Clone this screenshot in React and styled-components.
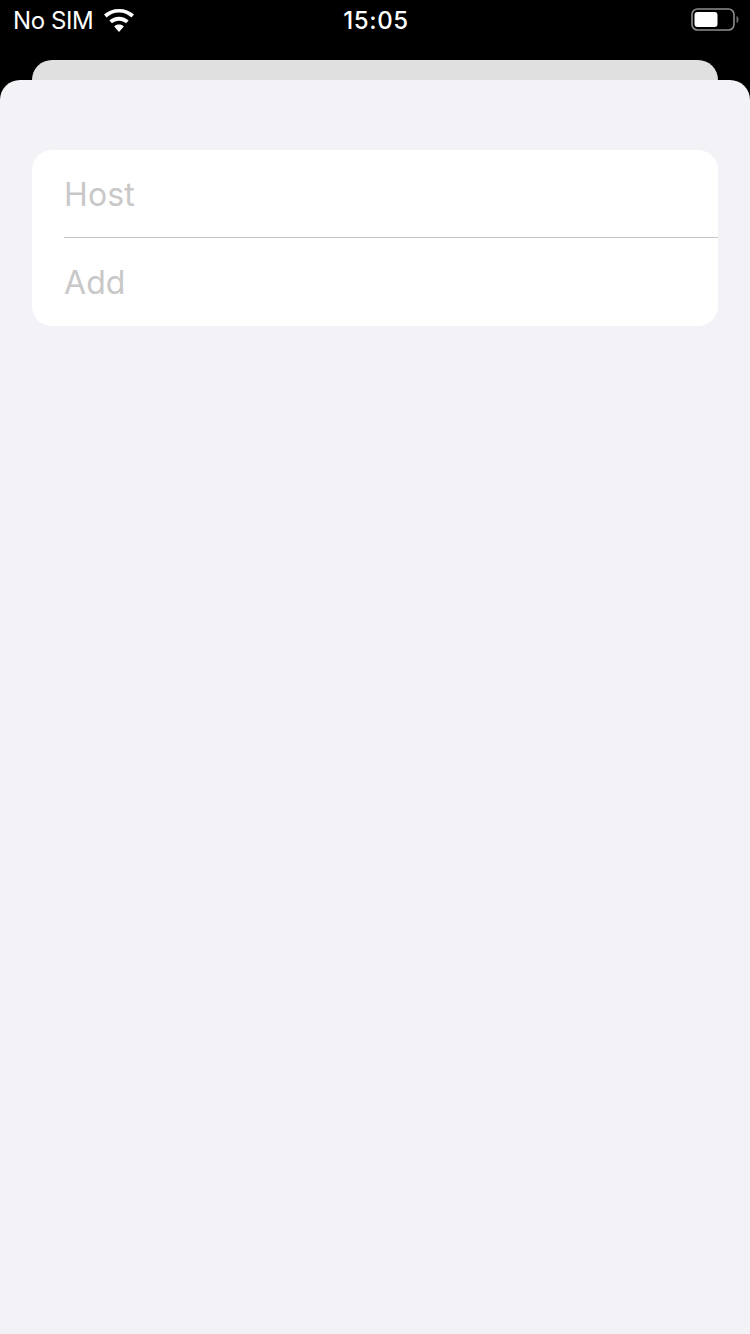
import React from 'react';
import styled, { createGlobalStyle } from 'styled-components';

const Global = createGlobalStyle`
  html, body { margin: 0; padding: 0; background: #000; }
  body { font-family: Inter, "Liberation Sans", Arial, sans-serif; }
`;

const Page = styled.div`
  width: 750px;
  height: 1334px;
  display: flex;
  flex-direction: column;
  background: #000;
  overflow: hidden;
`;

const StatusBar = styled.div`
  height: 40px;
  display: grid;
  grid-template-columns: 1fr auto 1fr;
  align-items: center;
  padding: 0 11px 0 13px;
  color: #fff;
`;

const Carrier = styled.div`
  display: flex;
  align-items: center;
  gap: 11px;
  font-size: 24px;
  letter-spacing: -0.4px;
`;

const Clock = styled.div`
  font-size: 24px;
  font-weight: 500;
  letter-spacing: 0.6px;
`;

const BatteryWrap = styled.div`
  justify-self: end;
  display: flex;
  align-items: center;
`;

const BackSheet = styled.div`
  height: 20px;
  margin: 20px 32px 0;
  background: #e0e0e0;
  border-radius: 20px 20px 0 0;
`;

const Sheet = styled.div`
  flex: 1;
  background: #f2f2f7;
  border-radius: 20px 20px 0 0;
  padding: 70px 32px 0;
`;

const Group = styled.div`
  background: #fff;
  border-radius: 20px;
  overflow: hidden;
`;

const Row = styled.div`
  height: ${p => p.$height}px;
  margin-left: 32px;
  padding-top: ${p => (p.$divider ? 2 : 0)}px;
  display: flex;
  align-items: center;
  font-size: 32px;
  color: #c8c8c8;
  letter-spacing: 0.1px;
  border-bottom: ${p => (p.$divider ? '1px solid #c6c6c8' : 'none')};
  box-sizing: border-box;
`;

const Wifi = () => (
  <svg width="30" height="23" viewBox="1.6 0 26.8 20.5" preserveAspectRatio="none">
    <path d="M15 3.2c4.3 0 8.2 1.7 11.1 4.4l2.3-2.6C24.9 1.7 20.2 0 15 0 9.8 0 5.100 1.700 1.600 5l2.300 2.600C6.800 4.900 10.700 3.200 15 3.200z" fill="#fff" />
    <path d="M15 10.400c2.400 0 4.600.9 6.300 2.400l2.300-2.600C21.300 8.100 18.300 6.900 15 6.900s-6.300 1.200-8.600 3.300l2.300 2.600c1.700-1.500 3.900-2.400 6.300-2.400z" fill="#fff" />
    <path d="M15 13.900c-1.700 0-3.200.6-4.300 1.700L15 20.500l4.300-4.900c-1.100-1.100-2.600-1.700-4.300-1.700z" fill="#fff" />
  </svg>
);

const Battery = () => (
  <svg width="48" height="24" viewBox="0 0 48 24">
    <rect x="1" y="1" width="42" height="21" rx="5.500" fill="none" stroke="#8e8e8e" strokeWidth="1.600" />
    <rect x="3.500" y="4" width="23" height="15" rx="3" fill="#fff" />
    <path d="M45.500 8c1.300.4 2 1.800 2 3.500s-.7 3.100-2 3.500z" fill="#6f6f6f" />
  </svg>
);

export default function App() {
  return (
    <Page>
      <Global />
      <StatusBar>
        <Carrier>
          No SIM
          <Wifi />
        </Carrier>
        <Clock>15:05</Clock>
        <BatteryWrap>
          <Battery />
        </BatteryWrap>
      </StatusBar>
      <BackSheet />
      <Sheet>
        <Group>
          <Row $height={88} $divider>Host</Row>
          <Row $height={88}>Add</Row>
        </Group>
      </Sheet>
    </Page>
  );
}
